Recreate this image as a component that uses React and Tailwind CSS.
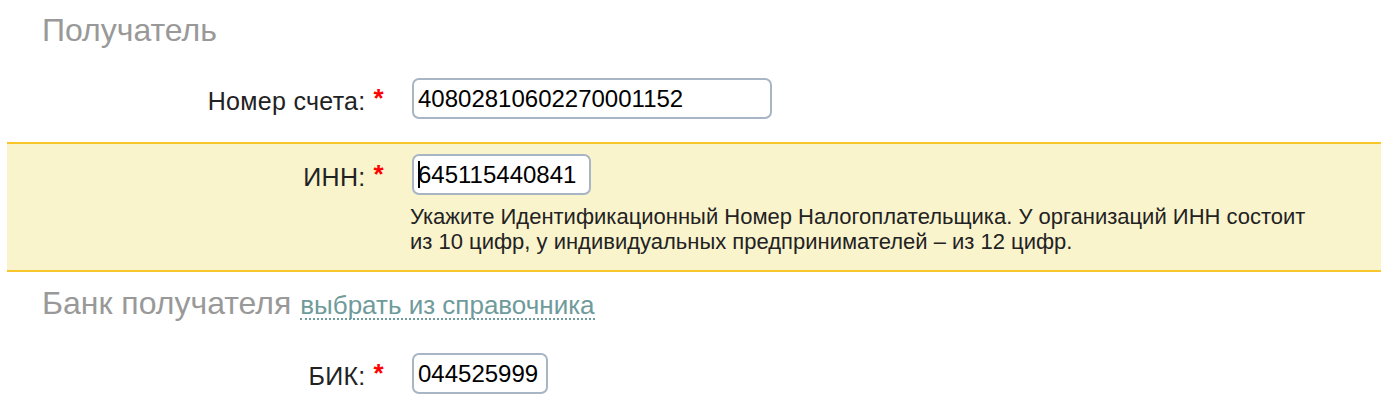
import React from 'react'

const FONT = { fontFamily: '"Liberation Sans", Arial, sans-serif' }

const Required = () => (
  <span className="text-[#ff0000] text-[26px] font-bold ml-[8px] relative top-[-3px]">*</span>
)

const Field = ({ label, value, width, caret }) => (
  <div className="flex items-center">
    <div className="w-[377px] text-right text-[25px] tracking-[0.3px] text-[#222] leading-none pt-[4px]">
      {label}
      <Required />
    </div>
    <div className="ml-[28px] relative">
      <input
        readOnly
        value={value}
        className="h-[41px] rounded-[7px] border-2 border-[#a7b5c4] bg-white pl-[4px] text-[24px] text-black outline-none"
        style={{ width, ...FONT }}
      />
      {caret && <span className="absolute left-[6px] top-[7px] w-[2px] h-[27px] bg-black" />}
    </div>
  </div>
)

export default function App() {
  return (
    <div className="w-[1400px] h-[408px] bg-white overflow-hidden pl-[7px] pr-[19px]" style={FONT}>
      <h2 className="pl-[35px] pt-[12px] text-[32px] leading-[36px] text-[#999]">Получатель</h2>

      <div className="mt-[30px]">
        <Field label="Номер счета:" value="40802810602270001152" width={360} />
      </div>

      <div className="mt-[23px] bg-[#faf4cd] border-y-2 border-[#f8c62b] pt-[10px] pb-[16px]">
        <Field label="ИНН:" value="645115440841" width={179} caret />
        <p className="ml-[403px] mt-[9px] text-[22px] leading-[25px] text-[#222]">
          Укажите Идентификационный Номер Налогоплательщика. У организаций ИНН состоит
          <br />
          из 10 цифр, у индивидуальных предпринимателей – из 12 цифр.
        </p>
      </div>

      <div className="mt-[13px] pl-[35px] flex items-baseline gap-[9px]">
        <h2 className="text-[32px] leading-[36px] text-[#999]">Банк получателя</h2>
        <a className="text-[26px] text-[#6f9b9b] border-b-2 border-dotted border-[#6f9b9b] leading-[26px] cursor-pointer">
          выбрать из справочника
        </a>
      </div>

      <div className="mt-[32px]">
        <Field label="БИК:" value="044525999" width={136} />
      </div>
    </div>
  )
}
